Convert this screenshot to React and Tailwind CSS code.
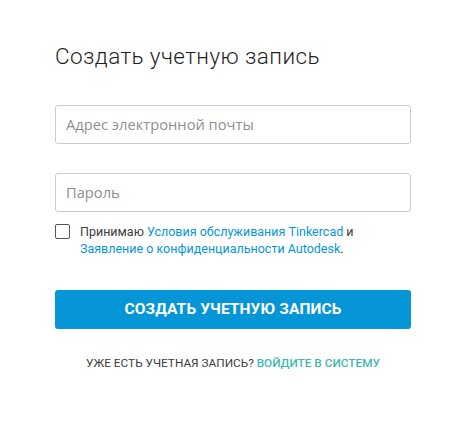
export default function App() {
  return (
    <div className="w-[474px] h-[422px] bg-white">
      <div className="w-[356px] ml-[55px] pt-[41px]">
        <h1 className="text-[22.5px] leading-[30px] font-light text-[#1f1f1f] font-['Roboto',sans-serif] tracking-[0.4px]">
          Создать учетную запись
        </h1>

        <div className="mt-[34px] h-[39px] rounded-[3px] border border-[#cccccc] flex items-center px-[10px]">
          <span className="text-[14.7px] text-[#8f8f8f] font-['Open_Sans',sans-serif]">
            Адрес электронной почты
          </span>
        </div>

        <div className="mt-[29px] h-[39px] rounded-[3px] border border-[#cccccc] flex items-center px-[10px]">
          <span className="text-[14.7px] text-[#8f8f8f] font-['Open_Sans',sans-serif]">
            Пароль
          </span>
        </div>

        <div className="mt-[11px] flex items-start gap-[10px]">
          <span className="mt-[1px] w-[15px] h-[15px] shrink-0 rounded-[2px] border-[1.5px] border-[#555555] bg-white" />
          <p className="text-[12.5px] leading-[17px] text-[#3c3c3c] font-['Roboto',sans-serif]">
            Принимаю <span className="text-[#0696d7]">Условия обслуживания Tinkercad</span> и
            <br />
            <span className="text-[#0696d7]">Заявление о конфиденциальности Autodesk</span>.
          </p>
        </div>

        <button className="mt-[33px] w-full h-[39px] rounded-[3px] bg-[#0696d7] text-white text-[15.5px] font-bold font-['Roboto',sans-serif] tracking-[0.1px]">
          СОЗДАТЬ УЧЕТНУЮ ЗАПИСЬ
        </button>

        <p className="mt-[26px] text-center text-[11.8px] text-[#3c3c3c] font-['Roboto',sans-serif]">
          УЖЕ ЕСТЬ УЧЕТНАЯ ЗАПИСЬ?{" "}
          <span className="text-[#3fb7b3] font-medium">ВОЙДИТЕ В СИСТЕМУ</span>
        </p>
      </div>
    </div>
  );
}
